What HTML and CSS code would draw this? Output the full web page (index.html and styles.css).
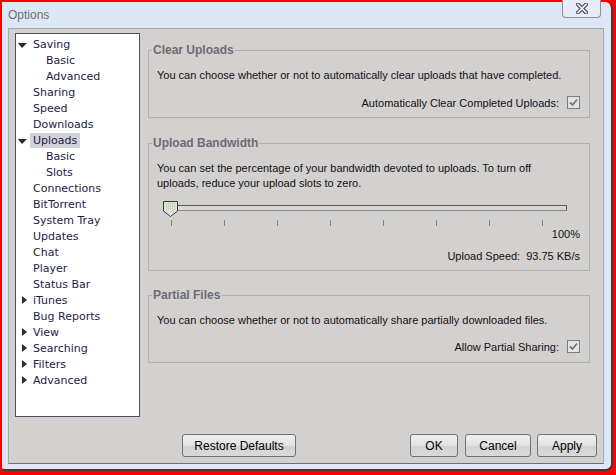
FILE: index.html
```html
<!DOCTYPE html>
<html>
<head>
  <title>Options</title>
  <link rel="stylesheet" href="styles.css">
</head>
<body>
  <div class="window">
    <div class="titlebar">
      <span class="title">Options</span>
      <div class="close-btn">
        <svg width="12" height="11" viewBox="0 0 12 11">
          <path d="M2 1.5 L10 9.5 M10 1.5 L2 9.5" stroke="#4b5168" stroke-width="4" stroke-linecap="square"/>
          <path d="M2 1.5 L10 9.5 M10 1.5 L2 9.5" stroke="#f4f6fb" stroke-width="1.6" stroke-linecap="square"/>
        </svg>
      </div>
    </div>

    <div class="panel">
      <div class="main">
        <ul class="tree">
          <li class="node"><span class="toggle"><i class="open"></i></span><span class="label">Saving</span></li>
          <li class="node child"><span class="label">Basic</span></li>
          <li class="node child"><span class="label">Advanced</span></li>
          <li class="node"><span class="toggle"></span><span class="label">Sharing</span></li>
          <li class="node"><span class="toggle"></span><span class="label">Speed</span></li>
          <li class="node"><span class="toggle"></span><span class="label">Downloads</span></li>
          <li class="node"><span class="toggle"><i class="open"></i></span><span class="label selected">Uploads</span></li>
          <li class="node child"><span class="label">Basic</span></li>
          <li class="node child"><span class="label">Slots</span></li>
          <li class="node"><span class="toggle"></span><span class="label">Connections</span></li>
          <li class="node"><span class="toggle"></span><span class="label">BitTorrent</span></li>
          <li class="node"><span class="toggle"></span><span class="label">System Tray</span></li>
          <li class="node"><span class="toggle"></span><span class="label">Updates</span></li>
          <li class="node"><span class="toggle"></span><span class="label">Chat</span></li>
          <li class="node"><span class="toggle"></span><span class="label">Player</span></li>
          <li class="node"><span class="toggle"></span><span class="label">Status Bar</span></li>
          <li class="node"><span class="toggle"><i class="closed"></i></span><span class="label">iTunes</span></li>
          <li class="node"><span class="toggle"></span><span class="label">Bug Reports</span></li>
          <li class="node"><span class="toggle"><i class="closed"></i></span><span class="label">View</span></li>
          <li class="node"><span class="toggle"><i class="closed"></i></span><span class="label">Searching</span></li>
          <li class="node"><span class="toggle"><i class="closed"></i></span><span class="label">Filters</span></li>
          <li class="node"><span class="toggle"><i class="closed"></i></span><span class="label">Advanced</span></li>
        </ul>

        <div class="sections">
          <fieldset class="section">
            <legend>Clear Uploads</legend>
            <p class="desc">You can choose whether or not to automatically clear uploads that have completed.</p>
            <div class="option-row">
              <span>Automatically Clear Completed Uploads:</span>
              <span class="checkbox">
                <svg width="11" height="11" viewBox="0 0 11 11"><path d="M2 5.5 L4.5 8 L9 2.5" fill="none" stroke="#767676" stroke-width="1.8"/></svg>
              </span>
            </div>
          </fieldset>

          <fieldset class="section bandwidth">
            <legend>Upload Bandwidth</legend>
            <p class="desc">You can set the percentage of your bandwidth devoted to uploads. To turn off<br>uploads, reduce your upload slots to zero.</p>
            <div class="slider">
              <div class="track"></div>
              <svg class="thumb" width="16" height="16" viewBox="0 0 16 16">
                <polygon points="0.5,0.5 14.5,0.5 14.5,10 7.5,15.5 0.5,10" fill="#dfe3d6" stroke="#3a3a3a" stroke-width="1"/>
                <path d="M3 3 H12 M3 5.5 H12 M3 8 H12" stroke="#a6c48e" stroke-width="1" stroke-dasharray="1 1"/>
              </svg>
            </div>
            <div class="ticks">
              <span class="tick"></span><span class="tick"></span><span class="tick"></span><span class="tick"></span>
              <span class="tick"></span><span class="tick"></span><span class="tick"></span><span class="tick"></span>
            </div>
            <div class="value-row">100%</div>
            <div class="speed-row">
              <span>Upload Speed:</span>
              <span>93.75 KB/s</span>
            </div>
          </fieldset>

          <fieldset class="section partial">
            <legend>Partial Files</legend>
            <p class="desc">You can choose whether or not to automatically share partially downloaded files.</p>
            <div class="option-row">
              <span>Allow Partial Sharing:</span>
              <span class="checkbox">
                <svg width="11" height="11" viewBox="0 0 11 11"><path d="M2 5.5 L4.5 8 L9 2.5" fill="none" stroke="#767676" stroke-width="1.8"/></svg>
              </span>
            </div>
          </fieldset>
        </div>
      </div>

      <div class="buttons">
        <button type="button" class="btn restore">Restore Defaults</button>
        <button type="button" class="btn ok">OK</button>
        <button type="button" class="btn cancel">Cancel</button>
        <button type="button" class="btn apply">Apply</button>
      </div>
    </div>
  </div>
</body>
</html>
```

FILE: styles.css
```css
body {
  margin: 0;
  background: #ff0000;
  font-family: "Liberation Sans", Arial, sans-serif;
}

.window {
  margin: 2px 3px 0 2px;
  width: 611px;
  height: 469px;
  box-sizing: border-box;
  background: #dde7f5;
  border-right: 2px solid #3c3c3c;
  border-bottom: 2px solid #3c3c3c;
  border-radius: 0 7px 7px 3px;
  display: flex;
  flex-direction: column;
}

/* title bar */
.titlebar {
  height: 26px;
  display: flex;
  justify-content: space-between;
  align-items: flex-start;
  padding: 0 10px 0 6px;
}

.title {
  font-size: 12px;
  line-height: 26px;
  color: #6e6e72;
}

.close-btn {
  margin-top: -2px;
  width: 39px;
  height: 18px;
  box-sizing: border-box;
  border: 1px solid #8b90a0;
  border-top: none;
  border-radius: 0 0 4px 4px;
  background: #e6edf7;
  display: flex;
  justify-content: center;
  align-items: center;
}

/* main grey area */
.panel {
  margin: 0 7px 5px 6px;
  height: 436px;
  box-sizing: border-box;
  border: 1px solid #a9a9a9;
  border-bottom-color: #707070;
  background: #d3d0d0;
  padding: 4px 6px 6px;
  display: flex;
  flex-direction: column;
}

.main {
  display: flex;
  gap: 8px;
  height: 384px;
}

/* tree */
.tree {
  width: 125px;
  box-sizing: border-box;
  margin: 0;
  padding: 2px 0 0 2px;
  list-style: none;
  background: #fff;
  border: 1px solid #4c505c;
}

.node {
  display: flex;
  align-items: center;
  height: 16px;
  font-family: "DejaVu Sans", Verdana, sans-serif;
  font-size: 11px;
  color: #1c1c46;
}

.node.child {
  padding-left: 25px;
}

.toggle {
  width: 12px;
  height: 16px;
  display: flex;
  align-items: center;
}

.toggle .open {
  width: 0;
  height: 0;
  margin-top: 2px;
  border-left: 4px solid transparent;
  border-right: 5px solid transparent;
  border-top: 5px solid #2a2a30;
}

.toggle .closed {
  width: 0;
  height: 0;
  margin-left: 4px;
  border-top: 4px solid transparent;
  border-bottom: 4px solid transparent;
  border-left: 5px solid #2a2a30;
}

.label {
  padding: 0 3px;
  line-height: 15px;
}

.label.selected {
  background: #d2d2da;
}

/* right side sections */
.sections {
  width: 442px;
  padding-top: 10px;
}

.section {
  margin: 0;
  min-width: 0;
  padding: 0 9px 7px 8px;
  border: 1px solid #b0b0b0;
  font-size: 11px;
  color: #111;
}

.section legend {
  margin-left: -5px;
  padding: 0 1px;
  font-size: 12px;
  line-height: 14px;
  font-weight: bold;
  color: #6c6c74;
}

.bandwidth {
  margin-top: 18px;
  padding-bottom: 6px;
}

.partial {
  margin-top: 17px;
  padding-bottom: 8px;
}

.desc {
  margin: 11px 0 0;
  line-height: 15px;
}

.option-row {
  display: flex;
  justify-content: flex-end;
  align-items: center;
  gap: 8px;
  height: 15px;
  margin-top: 12px;
}

.partial .option-row {
  margin-top: 11px;
}

.checkbox {
  width: 13px;
  height: 13px;
  box-sizing: border-box;
  border: 1px solid #7c7c7c;
  background: #e4e4e4;
  display: flex;
  justify-content: center;
  align-items: center;
}

/* slider */
.slider {
  position: relative;
  width: 404px;
  height: 16px;
  margin: 9px 0 0 6px;
  padding-top: 5px;
  box-sizing: border-box;
}

.track {
  height: 6px;
  box-sizing: border-box;
  border: 1px solid #5a5a5a;
  border-bottom-color: #8a8a8a;
  background: #d8d8d8;
}

.thumb {
  position: absolute;
  left: 0;
  top: 1px;
}

.ticks {
  display: flex;
  gap: 52px;
  height: 6px;
  margin: 4px 0 0 14px;
}

.tick {
  width: 1px;
  height: 6px;
  background: #62a13a;
}

.value-row {
  margin-top: 1px;
  line-height: 15px;
  text-align: right;
}

.speed-row {
  display: flex;
  justify-content: flex-end;
  gap: 6px;
  margin-top: 7px;
  line-height: 15px;
}

/* bottom buttons */
.buttons {
  display: flex;
  margin-top: 17px;
  height: 23px;
}

.btn {
  height: 23px;
  box-sizing: border-box;
  padding: 0;
  border: 1px solid #707070;
  border-radius: 3px;
  background: linear-gradient(#f0f0f0, #e2e2e2 50%, #d2d2d2 50%, #dadada);
  font-family: "Liberation Sans", Arial, sans-serif;
  font-size: 12px;
  color: #000;
}

.restore {
  width: 114px;
  margin-left: 167px;
}

.ok {
  width: 48px;
  margin-left: auto;
}

.cancel {
  width: 66px;
  margin-left: 7px;
}

.apply {
  width: 60px;
  margin-left: 6px;
}
```
